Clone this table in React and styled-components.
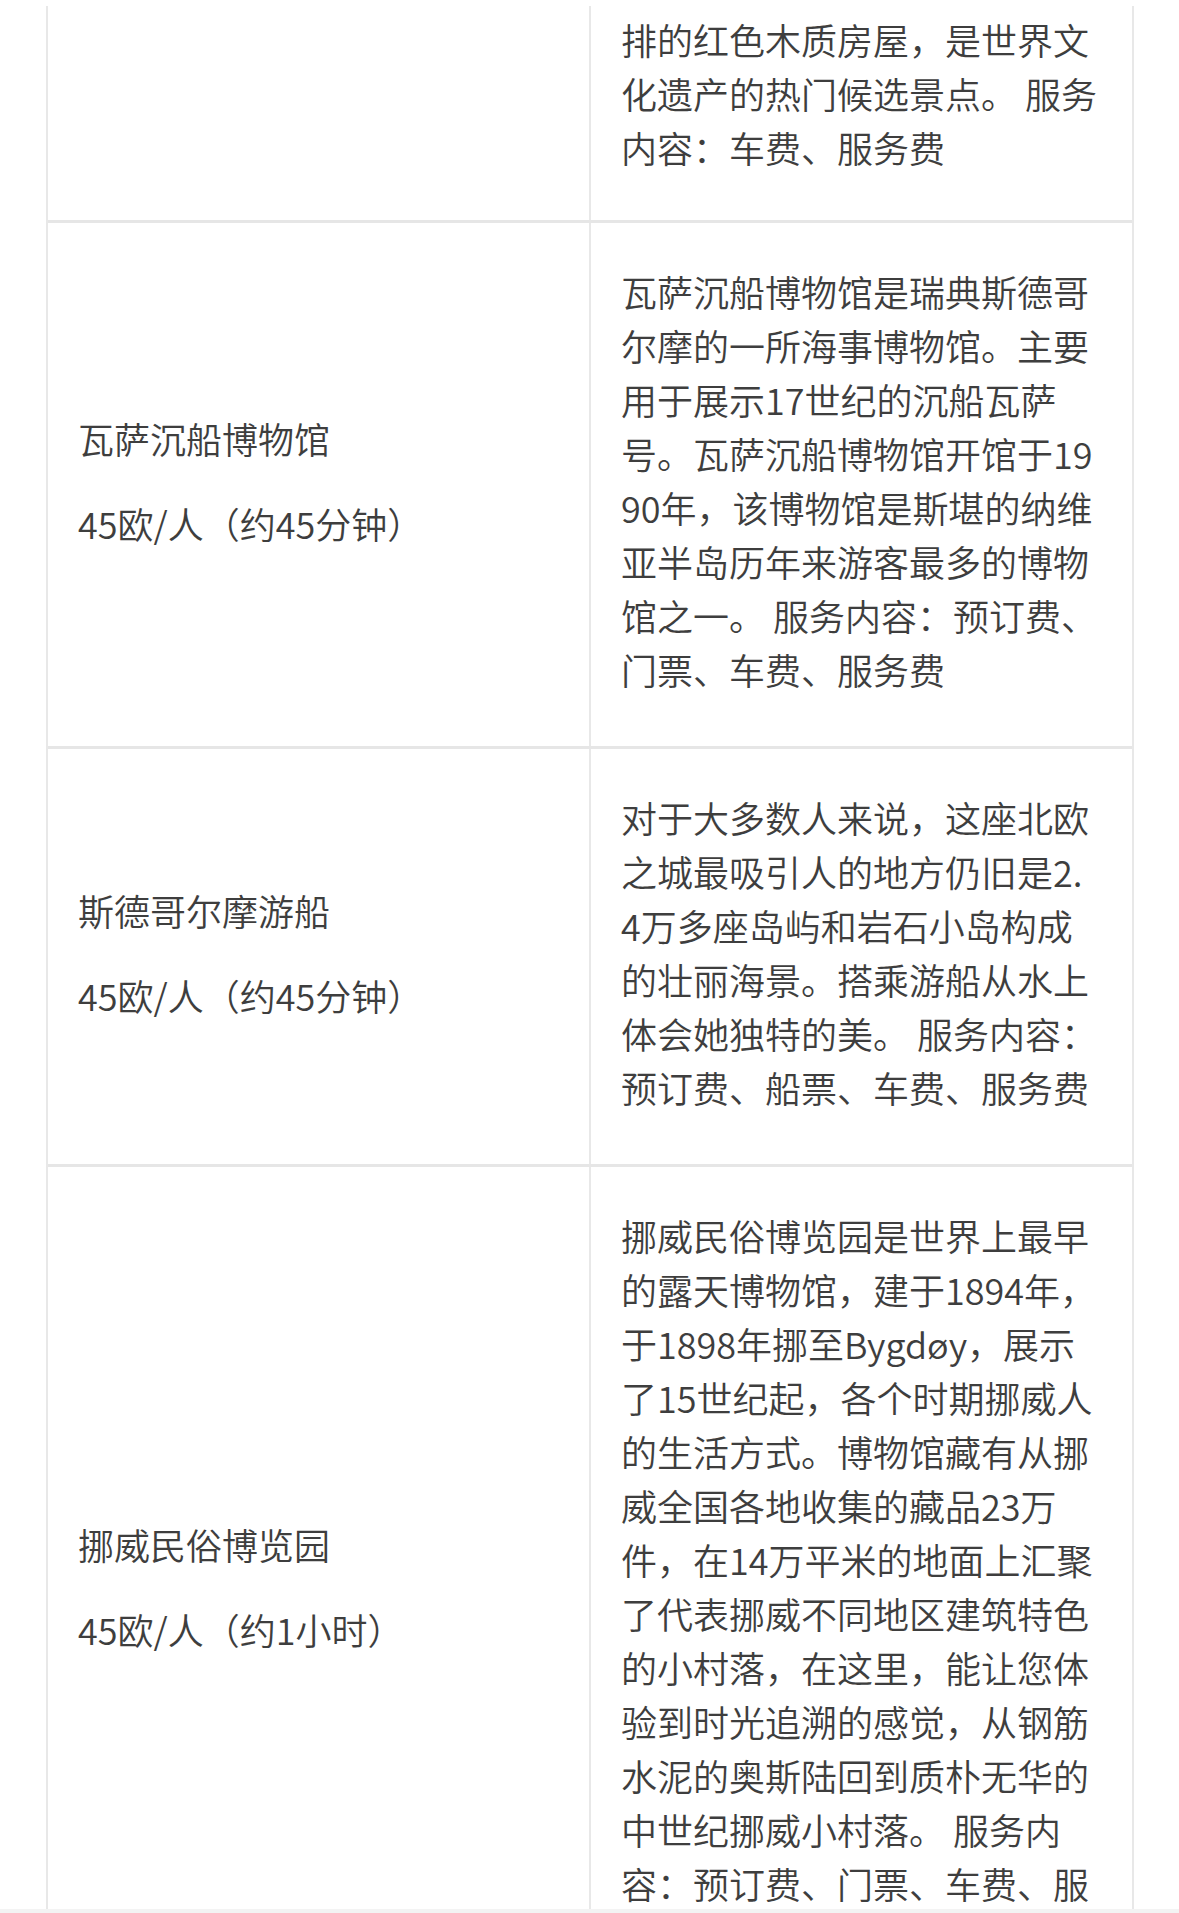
import React from "react";
import styled, { createGlobalStyle } from "styled-components";

const GlobalStyle = createGlobalStyle`
  html, body {
    margin: 0;
    padding: 0;
    background: #ffffff;
  }
  * {
    box-sizing: border-box;
  }
`;

const rows = [
  {
    first: true,
    lines: ["排的红色木质房屋，是世界文", "化遗产的热门候选景点。 服务", "内容：车费、服务费"],
  },
  {
    name: "瓦萨沉船博物馆",
    price: "45欧/人（约45分钟）",
    lines: [
      "瓦萨沉船博物馆是瑞典斯德哥",
      "尔摩的一所海事博物馆。主要",
      "用于展示17世纪的沉船瓦萨",
      "号。瓦萨沉船博物馆开馆于19",
      "90年，该博物馆是斯堪的纳维",
      "亚半岛历年来游客最多的博物",
      "馆之一。 服务内容：预订费、",
      "门票、车费、服务费",
    ],
  },
  {
    name: "斯德哥尔摩游船",
    price: "45欧/人（约45分钟）",
    lines: [
      "对于大多数人来说，这座北欧",
      "之城最吸引人的地方仍旧是2.",
      "4万多座岛屿和岩石小岛构成",
      "的壮丽海景。搭乘游船从水上",
      "体会她独特的美。 服务内容：",
      "预订费、船票、车费、服务费",
    ],
  },
  {
    name: "挪威民俗博览园",
    price: "45欧/人（约1小时）",
    lines: [
      "挪威民俗博览园是世界上最早",
      "的露天博物馆，建于1894年，",
      "于1898年挪至Bygdøy，展示",
      "了15世纪起，各个时期挪威人",
      "的生活方式。博物馆藏有从挪",
      "威全国各地收集的藏品23万",
      "件，在14万平米的地面上汇聚",
      "了代表挪威不同地区建筑特色",
      "的小村落，在这里，能让您体",
      "验到时光追溯的感觉，从钢筋",
      "水泥的奥斯陆回到质朴无华的",
      "中世纪挪威小村落。 服务内",
      "容：预订费、门票、车费、服",
      "务费",
    ],
  },
];

const App = () => {
  return (
    <>
      <GlobalStyle />
      <Page>
        <Table>
          {rows.map((row, i) => (
            <Row key={i}>
              <NameCell>
                {row.name && <Para>{row.name}</Para>}
                {row.price && <Para>{row.price}</Para>}
              </NameCell>
              <DescCell first={row.first}>
                {row.lines.map((line, j) => (
                  <Line key={j}>{line}</Line>
                ))}
              </DescCell>
            </Row>
          ))}
        </Table>
      </Page>
    </>
  );
};

export default App;

const Page = styled.div`
  width: 1179px;
  height: 1913px;
  overflow: hidden;
  padding-top: 6px;
  background: #ffffff;
  border-bottom: 4px solid #f3f3f3;
  font-family: "Noto Sans CJK SC", "Noto Sans", sans-serif;
  font-weight: 350;
  color: #3e3e3e;
  font-size: 36px;
  line-height: 54px;
`;

const Table = styled.div`
  margin-left: 46px;
  width: 1088px;
  border-left: 2px solid #e8e8e8;
  border-right: 2px solid #e8e8e8;
`;

const Row = styled.div`
  display: grid;
  grid-template-columns: 543px 541px;
  border-bottom: 3px solid #e6e6e6;
`;

const NameCell = styled.div`
  display: flex;
  flex-direction: column;
  justify-content: center;
  gap: 31px;
  padding: 0 30px 9px 30px;
  border-right: 2px solid #e8e8e8;
`;

const Para = styled.div`
  white-space: nowrap;
`;

const DescCell = styled.div`
  padding: ${(p) => (p.first ? "6px 20px 46px 30px" : "41px 20px 50px 30px")};
`;

const Line = styled.div`
  white-space: nowrap;
`;
